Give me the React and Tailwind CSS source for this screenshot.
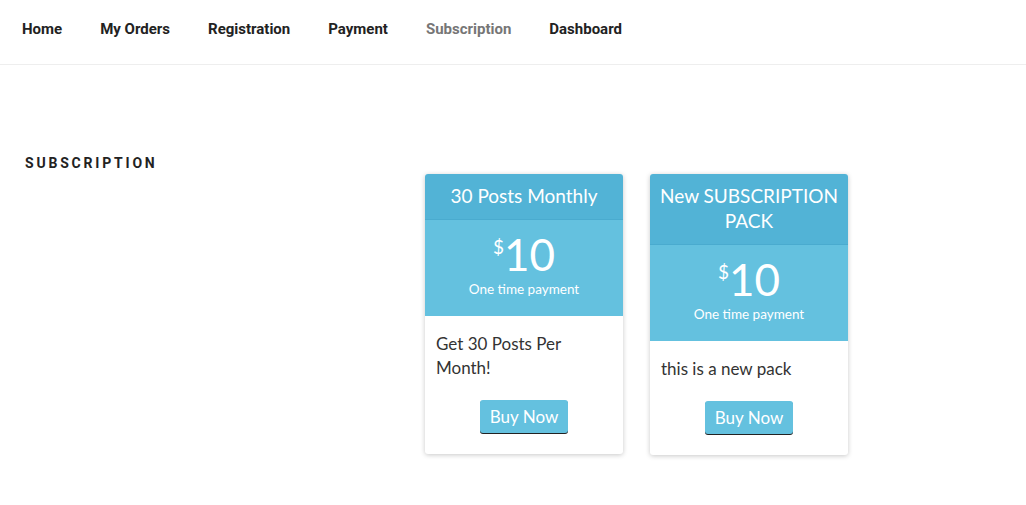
import React from "react";

const nav = ["Home", "My Orders", "Registration", "Payment", "Subscription", "Dashboard"];

function Card({ title, desc }) {
  return (
    <div className="w-[198px] rounded-[3px] bg-white shadow-[0_1px_5px_rgba(0,0,0,0.22)] overflow-hidden">
      <div className="bg-[#52b3d6] border-b border-[#4aabcf] px-2 pt-[9px] pb-[11px] text-center text-[19px] leading-[25px] text-white">
        {title}
      </div>
      <div className="bg-[#64c1df] pt-[12px] pb-[18px] text-center text-white">
        <div className="flex justify-center items-start leading-none">
          <span className="text-[19px] mt-[5px]">$</span>
          <span className="text-[44px] leading-[44px]">10</span>
        </div>
        <div className="text-[13.5px] leading-[18px] mt-[4px]">One time payment</div>
      </div>
      <div className="px-[11px] pt-[16px] pb-[21px]">
        <p className="text-[17px] leading-[24px] text-[#333]">{desc}</p>
        <div className="flex justify-center mt-[20px]">
          <button className="h-[33px] px-[10px] rounded-[3px] bg-[#64c1df] text-white text-[17px] leading-none shadow-[0_1px_0_#222] border-0">
            Buy Now
          </button>
        </div>
      </div>
    </div>
  );
}

export default function App() {
  return (
    <div className="min-h-[505px] bg-white" style={{ fontFamily: "Lato, 'Noto Sans', sans-serif" }}>
      <header className="h-[65px] border-b border-[#eeeeee] flex items-center px-[22px]">
        <nav className="flex gap-[38px] text-[15px] font-bold text-[#222] pb-[6px]" style={{ fontFamily: "Roboto, Lato, sans-serif" }}>
          {nav.map((n) => (
            <span key={n} className={n === "Subscription" ? "text-[#767676]" : ""}>{n}</span>
          ))}
        </nav>
      </header>
      <main className="flex pt-[88px] pl-[25px]">
        <h2 className="w-[400px] text-[14px] font-bold tracking-[0.2em] text-[#222] uppercase" style={{ fontFamily: "Roboto, Lato, sans-serif" }}>
          Subscription
        </h2>
        <div className="flex items-start gap-[27px] pt-[21px]">
          <Card title="30 Posts Monthly" desc="Get 30 Posts Per Month!" />
          <Card title="New SUBSCRIPTION PACK" desc="this is a new pack" />
        </div>
      </main>
    </div>
  );
}
